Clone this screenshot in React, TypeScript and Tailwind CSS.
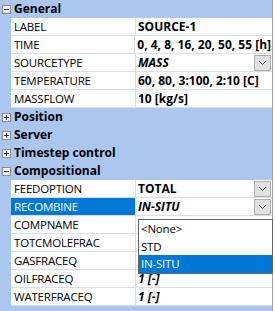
import React from "react";

const BLUE = "bg-[#abc6ef]";

function Box({ open }: { open: boolean }) {
  return (
    <svg width="9" height="9" viewBox="0 0 9 9" className="block">
      <rect x="0.5" y="0.5" width="8" height="8" fill="#f4f4f4" stroke="#8c8c8c" />
      <line x1="2" y1="4.5" x2="7" y2="4.5" stroke="#333" />
      {!open && <line x1="4.5" y1="2" x2="4.5" y2="7" stroke="#333" />}
    </svg>
  );
}

function Chevron() {
  return (
    <div className="w-[17px] h-[16px] bg-[#e1e1e1] border border-[#adadad] flex items-center justify-center">
      <svg width="9" height="6" viewBox="0 0 9 6">
        <polyline points="1,1 4.5,4.5 8,1" fill="none" stroke="#606060" strokeWidth="1" />
      </svg>
    </div>
  );
}

function Header({ title, open }: { title: string; open: boolean }) {
  return (
    <div className={`h-[18px] flex items-center ${BLUE}`}>
      <div className="w-[14px] flex items-center pl-[2px]">
        <Box open={open} />
      </div>
      <span className="font-bold text-[12px] text-black leading-none">{title}</span>
    </div>
  );
}

function Row({
  name,
  value,
  italic,
  dropdown,
  selected,
}: {
  name: string;
  value: string;
  italic?: boolean;
  dropdown?: boolean;
  selected?: boolean;
}) {
  return (
    <div className="h-[18px] flex">
      <div className={`w-[11px] ${BLUE}`} />
      <div
        className={`w-[125px] border-b border-r border-[#d5dff0] flex items-center pl-[3px] text-[11.5px] tracking-[-0.2px] leading-none ${
          selected ? "bg-[#0078d7] text-white" : "bg-white text-black"
        }`}
      >
        {name}
      </div>
      <div className="flex-1 border-b border-[#d5dff0] bg-white flex items-center pl-[2px] pr-[1px]">
        <span
          className={`flex-1 font-bold text-[12px] leading-none text-black whitespace-nowrap ${
            italic ? "italic" : ""
          }`}
        >
          {value}
        </span>
        {dropdown && <Chevron />}
      </div>
    </div>
  );
}

export default function App() {
  return (
    <div
      className="w-[275px] h-[311px] bg-white relative overflow-hidden"
      style={{ fontFamily: '"Open Sans", "Noto Sans", sans-serif' }}
    >
      <div className={`w-[273px] h-[311px] ${BLUE} border-r border-[#a0a0a0]`}>
        <Header title="General" open />
        <Row name="LABEL" value="SOURCE-1" />
        <Row name="TIME" value="0, 4, 8, 16, 20, 50, 55 [h]" />
        <Row name="SOURCETYPE" value="MASS" italic dropdown />
        <Row name="TEMPERATURE" value="60, 80, 3:100, 2:10 [C]" />
        <Row name="MASSFLOW" value="10 [kg/s]" />
        <Header title="Position" open={false} />
        <Header title="Server" open={false} />
        <Header title="Timestep control" open={false} />
        <Header title="Compositional" open />
        <Row name="FEEDOPTION" value="TOTAL" dropdown />
        <Row name="RECOMBINE" value="IN-SITU" italic dropdown selected />
        <Row name="COMPNAME" value="" />
        <Row name="TOTCMOLEFRAC" value="" />
        <Row name="GASFRACEQ" value="" />
        <Row name="OILFRACEQ" value="1 [-]" italic />
        <Row name="WATERFRACEQ" value="1 [-]" italic />
      </div>
      <div className="absolute left-[138px] top-[219px] w-[135px] bg-white border border-[#646464] text-[11.5px] tracking-[-0.2px] leading-none text-black">
        <div className="h-[18px] flex items-center pl-[2px]">&lt;None&gt;</div>
        <div className="h-[17px] flex items-center pl-[2px]">STD</div>
        <div className="h-[18px] flex items-center pl-[2px] bg-[#0078d7] text-white">IN-SITU</div>
      </div>
    </div>
  );
}
